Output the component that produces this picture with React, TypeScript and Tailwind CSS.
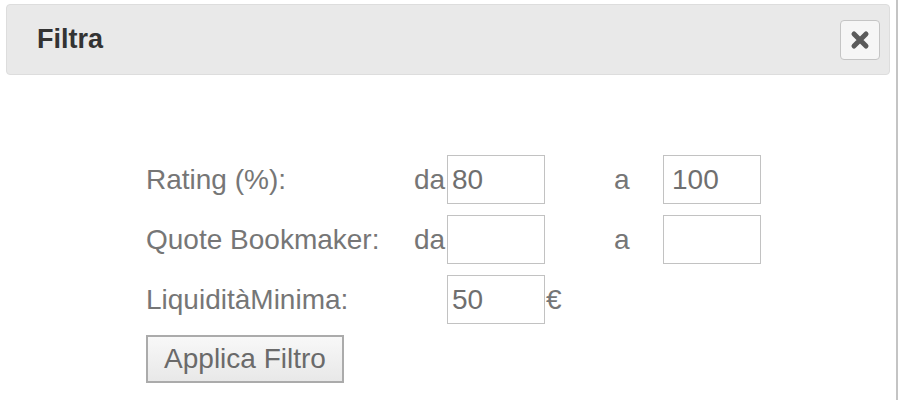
import React from "react";

function CloseIcon() {
  return (
    <svg width="20" height="20" viewBox="0 0 20 20">
      <path d="M4 4 L16 16 M16 4 L4 16" stroke="#5a5a5a" strokeWidth="5" strokeLinecap="round" />
    </svg>
  );
}

export default function App() {
  const font = { fontFamily: '"Liberation Sans", Arial, Helvetica, sans-serif' };
  return (
    <div className="w-[898px] h-[400px] flex bg-white overflow-hidden" style={font}>
      <div className="w-[896px] h-full flex flex-col">
        <div className="mt-[4px] ml-[6px] w-[884px] h-[71px] rounded-[4px] border border-[#dddddd] bg-[#e9e9e9] flex items-center justify-between pl-[30px] pr-[9px]">
          <span className="text-[27px] font-bold text-[#333333] leading-none">Filtra</span>
          <button className="w-[40px] h-[40px] rounded-[4px] border border-[#c5c5c5] bg-[#f6f6f6] flex items-center justify-center">
            <CloseIcon />
          </button>
        </div>
        <div className="ml-[146px] mt-[80px] flex flex-col gap-[11px] text-[28px] text-[#767676] leading-none">
          <div className="flex items-center h-[49px]">
            <span className="w-[268px]">Rating (%):</span>
            <span className="w-[33px]">da</span>
            <div className="w-[98px] h-[49px] border border-[#c2c2c2] flex items-center pl-[4px] text-[#6f6f6f]">80</div>
            <span className="w-[118px] pl-[69px]">a</span>
            <div className="w-[98px] h-[49px] border border-[#c2c2c2] flex items-center pl-[8px] text-[#6f6f6f]">100</div>
          </div>
          <div className="flex items-center h-[49px]">
            <span className="w-[268px]">Quote Bookmaker:</span>
            <span className="w-[33px]">da</span>
            <div className="w-[98px] h-[49px] border border-[#c2c2c2]"></div>
            <span className="w-[118px] pl-[69px]">a</span>
            <div className="w-[98px] h-[49px] border border-[#c2c2c2]"></div>
          </div>
          <div className="flex items-center h-[49px]">
            <span className="w-[301px]">LiquiditàMinima:</span>
            <div className="w-[98px] h-[49px] border border-[#c2c2c2] flex items-center pl-[4px] text-[#6f6f6f]">50</div>
            <span className="pl-[1px]">€</span>
          </div>
          <div>
            <button className="w-[198px] h-[48px] border-2 border-[#ababab] bg-gradient-to-b from-[#f8f8f8] to-[#e8e8e8] text-[28px] text-[#6a6a6a] leading-none flex items-center justify-center">
              Applica Filtro
            </button>
          </div>
        </div>
      </div>
      <div className="w-[2px] h-full bg-[#c4c4c4]"></div>
    </div>
  );
}
